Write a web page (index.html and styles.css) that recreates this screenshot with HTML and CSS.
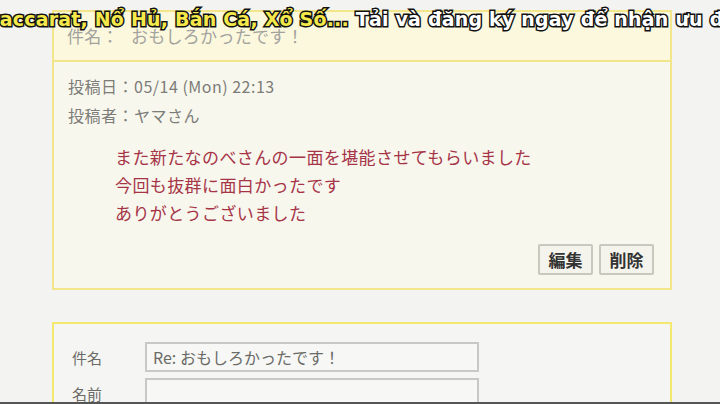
FILE: index.html
```html
<!DOCTYPE html>
<html lang="ja">
<head>
<meta charset="utf-8">
<link rel="stylesheet" href="styles.css">
</head>
<body>
<main class="page">
  <section class="card post">
    <header class="post-head">件名：<span class="gap"></span>おもしろかったです！</header>
    <div class="post-body">
      <p class="meta">投稿日：05/14 (Mon) 22:13</p>
      <p class="meta">投稿者：ヤマさん</p>
      <div class="message">
        <p>また新たなのべさんの一面を堪能させてもらいました</p>
        <p>今回も抜群に面白かったです</p>
        <p>ありがとうございました</p>
      </div>
      <div class="actions">
        <button class="btn">編集</button>
        <button class="btn">削除</button>
      </div>
    </div>
  </section>
  <section class="card reply">
    <div class="field">
      <label class="label">件名</label>
      <div class="input">Re: おもしろかったです！</div>
    </div>
    <div class="field">
      <label class="label">名前</label>
      <div class="input"></div>
    </div>
  </section>
</main>
<div class="caption"><span class="yellow">Baccarat, Nổ Hủ, Bắn Cá, Xổ Số...</span> <span class="white">Tải và đăng ký ngay để nhận ưu đãi</span></div>
<div class="bottom-bar"></div>
</body>
</html>
```
FILE: styles.css
```css
* { box-sizing: border-box; }
html, body { margin: 0; padding: 0; }
body {
  width: 720px;
  height: 404px;
  overflow: hidden;
  background: #f3f3f2;
  font-family: "Noto Sans CJK JP", "Noto Sans", sans-serif;
  position: relative;
}
p { margin: 0; }
.page {
  padding: 10px 0 0 52px;
  display: flex;
  flex-direction: column;
  gap: 32px;
}
.card {
  width: 620px;
  border: 2px solid #f3e68a;
}
.post { background: #f8f7ee; }
.post-head {
  height: 50px;
  background: #fbf8de;
  border-bottom: 2px solid #f3e68a;
  color: #a3a39e;
  font-size: 17px;
  line-height: 48px;
  padding-left: 13px;
  letter-spacing: 0.3px;
}
.gap { display: inline-block; width: 12px; }
.post-body {
  padding: 10px 16px 13px 14px;
  display: flex;
  flex-direction: column;
}
.meta {
  color: #7c7c78;
  font-size: 16px;
  line-height: 29px;
  letter-spacing: 0.5px;
}
.message {
  margin-top: 13px;
  padding-left: 47px;
  color: #a63447;
  font-size: 17px;
  line-height: 28px;
  letter-spacing: 0.4px;
}
.actions {
  margin-top: 17px;
  display: flex;
  justify-content: flex-end;
  gap: 6px;
}
.btn {
  width: 55px;
  height: 31px;
  padding: 0;
  background: #f5f4ec;
  border: 2px solid #c9c8be;
  border-radius: 2px;
  color: #333;
  font-family: "Noto Sans CJK JP", sans-serif;
  font-size: 17px;
  font-weight: 700;
  line-height: 27px;
}
.reply {
  background: #f5f5f3;
  border-color: #f5e86e;
  padding: 18px 0 10px 18px;
  display: flex;
  flex-direction: column;
  gap: 6px;
}
.field { display: flex; align-items: center; }
.label {
  width: 73px;
  color: #6a6a66;
  font-size: 15px;
}
.input {
  width: 334px;
  height: 30px;
  border: 2px solid #c8c8c4;
  background: #f7f7f5;
  color: #6b6b68;
  font-size: 16px;
  line-height: 26px;
  padding-left: 6px;
}
.caption {
  position: absolute;
  top: 7px;
  left: -15px;
  white-space: nowrap;
  font-family: "DejaVu Sans", sans-serif;
  font-weight: 700;
  font-size: 19px;
  line-height: 24px;
  letter-spacing: 0.2px;
  -webkit-text-stroke: 3px #111;
  paint-order: stroke fill;
}
.yellow { color: #f4e84a; }
.white { color: #ffffff; }
.bottom-bar {
  position: absolute;
  left: 0;
  right: 0;
  bottom: 0;
  height: 2px;
  background: #555;
}
```
